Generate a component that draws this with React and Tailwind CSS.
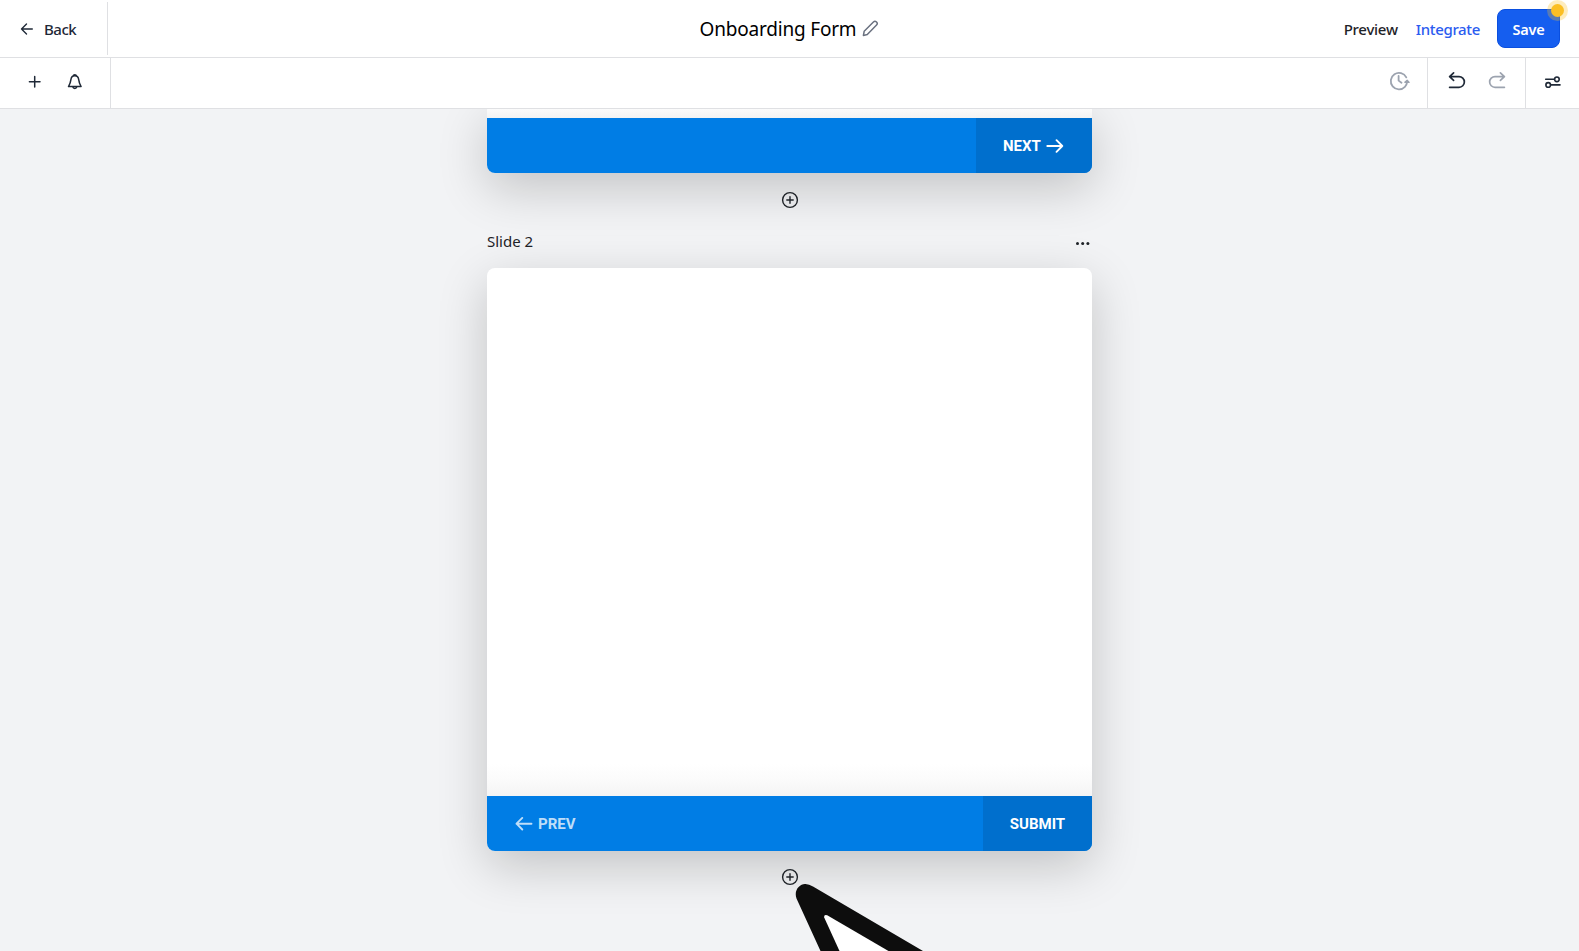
function Icon({ className, children, size = 20, box = 20, stroke = 1.7 }) {
  return (
    <svg className={className} width={size} height={size} viewBox={`0 0 ${box} ${box}`} fill="none" stroke="currentColor" strokeWidth={stroke} strokeLinecap="round" strokeLinejoin="round">
      {children}
    </svg>
  );
}

function AddSlide() {
  return (
    <button className="flex size-[18px] shrink-0 items-center justify-center text-[#1f2328]">
      <Icon size={18} box={18} stroke={1.4}>
        <circle cx="9" cy="9" r="7.4" />
        <path d="M9 5.8v6.4M5.8 9h6.4" />
      </Icon>
    </button>
  );
}

function SlideFooter({ children }) {
  return (
    <div className="flex h-[55px] shrink-0 justify-between overflow-hidden rounded-b-lg bg-[#007de5] font-[Roboto,sans-serif] text-[15px] font-bold text-white">
      {children}
    </div>
  );
}

export default function App() {
  return (
    <div className="flex h-[951px] w-full flex-col overflow-hidden bg-[#f2f3f5] font-['Noto_Sans',sans-serif] text-[#1f2937]">
      <header className="relative z-10 grid h-[58px] shrink-0 grid-cols-[1fr_auto_1fr] items-center border-b border-[#dfe0e3] bg-white">
        <div className="flex h-[53px] w-[108px] items-center border-r border-[#dfe0e3] pl-5">
          <Icon className="mr-[10px]" size={14} box={14} stroke={1.4}>
            <path d="M12.300 7H1.500M6.500 2L1.500 7l5 5" />
          </Icon>
          <span className="pt-0.5 text-[15px] font-medium tracking-[-0.5px]">Back</span>
        </div>
        <div className="flex items-center">
          <h1 className="pt-px text-[19px] tracking-[-0.2px] text-black">Onboarding Form</h1>
          <Icon className="ml-[6px] text-[#6b7280]" size={17} box={18} stroke={1.6}>
            <path d="M1.500 16.300l.8-4.300L12.100 2.100a2.200 2.200 0 0 1 3.300 3.200L5.600 15.400z" />
          </Icon>
        </div>
        <div className="flex items-center justify-end pr-[19px] text-[15px] font-medium">
          <span className="mr-[18px] pt-0.5 tracking-[-0.25px] text-[#1f2328]">Preview</span>
          <span className="mr-[17px] pt-0.5 tracking-[-0.35px] text-[#2b5cf0]">Integrate</span>
          <button className="relative flex h-[39px] w-[63px] items-center justify-center rounded-lg border border-[#0a4fe0] bg-[#155eef] pt-0.5 text-[14.5px] font-semibold tracking-[-0.2px] text-white">
            Save
            <span className="absolute -top-[10px] -right-[9px] flex size-[21px] items-center justify-center rounded-full bg-[#fbbf24]/30">
              <span className="size-[13px] rounded-full bg-[#fbbf24]" />
            </span>
          </button>
        </div>
      </header>

      <div className="relative z-10 flex h-[51px] shrink-0 justify-between border-b border-[#dfe0e3] bg-white">
        <div className="flex w-[111px] items-center border-r border-[#dfe0e3] pb-0.5 pl-[25px]">
          <Icon>
            <path d="M9.700 4.500v10.600M4.400 9.800h10.600" strokeWidth="1.5" />
          </Icon>
          <Icon className="ml-5" stroke={1.5}>
            <path d="M8 4a1.900 1.900 0 0 1 3.600 0M9.800 3.800c-2.300 0-3.600 1.600-3.900 3.800-.3 2.800-.8 4.200-2.400 7h12.600c-1.600-2.800-2.100-4.200-2.400-7-.3-2.200-1.600-3.800-3.900-3.800zM7.700 14.900a2.200 2.200 0 0 0 4.200 0" />
          </Icon>
        </div>
        <div className="flex">
          <div className="flex items-center pr-[17px] pb-1 text-[#9ca3af]">
            <Icon size={22} box={22} stroke={1.800}>
              <path d="M18.300 7.400A8.200 8.200 0 1 0 16.900 16.800Q18.800 15 19.100 12.200M10.600 6v4.600l2.900 2.200" />
              <path d="M16.800 12.300l2.400-2.200 2 2.200z" fill="currentColor" strokeWidth="1.200" />
            </Icon>
          </div>
          <div className="flex w-[98px] items-center justify-between border-l border-[#dfe0e3] px-[18px] pb-1">
            <Icon>
              <path d="M7.600 1.800L3.600 5.600l4 3.800M3.800 5.600H13a5.300 5.300 0 0 1 0 10.700H3.600" />
            </Icon>
            <Icon className="text-[#9ca3af]">
              <path d="M13.400 1.800l4 3.800-4 3.800M17.200 5.600H8a5.300 5.300 0 0 0 0 10.700h9.400" />
            </Icon>
          </div>
          <div className="flex w-[54px] items-center border-l border-[#dfe0e3] pb-0.5 pl-[17px]">
            <Icon stroke={1.600}>
              <path d="M2.700 7.300h8.400M8 12.900H17" />
              <circle cx="13.900" cy="7.300" r="2.300" />
              <circle cx="5.200" cy="12.900" r="2.300" />
            </Icon>
          </div>
        </div>
      </div>

      <main className="relative flex flex-1 flex-col items-center">
        <section className="w-[605px] shrink-0 rounded-b-lg bg-white shadow-[0_15px_50px_rgba(0,0,0,0.2)]">
          <div className="h-[9px] bg-linear-to-b from-[#fbfbfb] to-[#f3f3f3]" />
          <SlideFooter>
            <span />
            <button className="flex w-[116px] items-center bg-[#006fcd] pl-[27px]">
              <span className="pt-0.5">NEXT</span>
              <Icon className="ml-[5px]" size={18} box={18} stroke={1.900}>
                <path d="M1.300 9h15M10.500 3.200l5.800 5.800-5.800 5.800" />
              </Icon>
            </button>
          </SlideFooter>
        </section>

        <div className="flex h-[95px] w-[605px] shrink-0 flex-col items-center pt-[18px]">
          <AddSlide />
          <div className="mt-[21px] flex w-full items-center justify-between text-[#1f2328]">
            <span className="text-[15px] leading-[22px]">Slide 2</span>
            <svg className="mt-1 mr-0.5" width="16" height="6" fill="currentColor">
              <circle cx="3.500" cy="3.500" r="1.500" />
              <circle cx="8.700" cy="3.500" r="1.500" />
              <circle cx="13.900" cy="3.500" r="1.500" />
            </svg>
          </div>
        </div>

        <section className="flex h-[583px] w-[605px] shrink-0 flex-col rounded-lg bg-white shadow-[0_15px_50px_rgba(0,0,0,0.2)]">
          <div className="flex flex-1 items-end">
            <div className="h-[32px] w-full bg-linear-to-b from-white via-[#fbfbfb] to-[#f4f4f4]" />
          </div>
          <SlideFooter>
            <button className="flex items-center pl-7 text-white/75">
              <Icon className="mr-[5px]" size={18} box={18} stroke={1.900}>
                <path d="M16.500 8.700h-15M7.300 2.900l-5.800 5.800 5.800 5.800" />
              </Icon>
              <span className="pt-0.5">PREV</span>
            </button>
            <button className="flex w-[109px] items-center justify-center bg-[#006fcd] pt-0.5">SUBMIT</button>
          </SlideFooter>
        </section>
        <div className="pt-[17px]">
          <AddSlide />
        </div>
        <svg className="absolute bottom-0 left-[794px]" width="130" height="68" viewBox="795 883 130 68">
          <path d="M797.500 898.500C794.500 890 801 883.500 806.500 884Q810 884 814 886.500L924 951H821.500z" fill="#0d0d0d" />
          <path d="M825.200 917.500q-.7-3.500 3-2.200L889.500 951h-49z" fill="#fff" />
        </svg>
      </main>
    </div>
  );
}
